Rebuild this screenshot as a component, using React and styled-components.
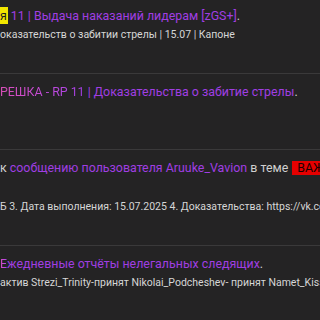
import React from "react";
import styled, { createGlobalStyle } from "styled-components";

const Global = createGlobalStyle`
  html, body {
    margin: 0;
    padding: 0;
    background: #242324;
  }
  body {
    font-family: Roboto, sans-serif;
  }
`;

const Page = styled.div`
  width: 320px;
  height: 320px;
  overflow: hidden;
  background: #242324;
`;

const List = styled.ol`
  list-style: none;
  margin: -2px 0 0 0;
  padding: 0;
`;

const Item = styled.li`
  padding: 8px 0 29px 0;
  border-bottom: 1px solid #3a393a;
  white-space: nowrap;
`;

const Title = styled.h3`
  margin: 0;
  font-family: Roboto, sans-serif;
  font-size: 12.4px;
  font-weight: 400;
  line-height: 20px;
  min-height: ${(p) => (p.$lines || 1) * 20}px;
  color: #d0d0d0;
`;

const Link = styled.a`
  color: #a03ee2;
  text-decoration: none;
`;

const Prefix = styled.span`
  background: linear-gradient(90deg, #d94fb8 0%, #bf4ade 60%, #a03ee2 100%);
  -webkit-background-clip: text;
  background-clip: text;
  color: transparent;
`;

const Mark = styled.mark`
  background: #f2e600;
  color: #1d1d1d;
  padding: 1px 1px 1px 0;
  margin-right: 3px;
`;

const Badge = styled.span`
  display: inline-block;
  background: #e60000;
  color: #1a0000;
  padding: 0 5px;
  margin-left: 4px;
  line-height: 14px;
`;

const Snippet = styled.p`
  margin: 0;
  font-family: Roboto, sans-serif;
  font-size: 10.5px;
  line-height: 18px;
  min-height: 18px;
  color: #d6d6d6;
`;

export default function App() {
  return (
    <Page>
      <Global />
      <List>
        <Item>
          <Title>
            <Link href="#">
              <Mark>я</Mark>11 | Выдача наказаний лидерам [zGS+]
            </Link>
            .
          </Title>
          <Snippet>оказательств о забитии стрелы | 15.07 | Капоне</Snippet>
        </Item>
        <Item>
          <Title>
            <Link href="#">
              <Prefix>РЕШКА - RP 11</Prefix> | Доказательства о забитие стрелы
            </Link>
            .
          </Title>
          <Snippet />
        </Item>
        <Item>
          <Title $lines={2}>
            к <Link href="#">сообщению пользователя Aruuke_Vavion</Link> в теме
            <Badge>ВАЖНО</Badge>
          </Title>
          <Snippet>
            Б 3. Дата выполнения: 15.07.2025 4. Доказательства: https://vk.com
          </Snippet>
        </Item>
        <Item>
          <Title>
            <Link href="#">
              <Prefix>Е</Prefix>жедневные отчёты нелегальных следящих
            </Link>
            .
          </Title>
          <Snippet>
            актив Strezi_Trinity-принят Nikolai_Podcheshev- принят Namet_Kiss
          </Snippet>
        </Item>
      </List>
    </Page>
  );
}
